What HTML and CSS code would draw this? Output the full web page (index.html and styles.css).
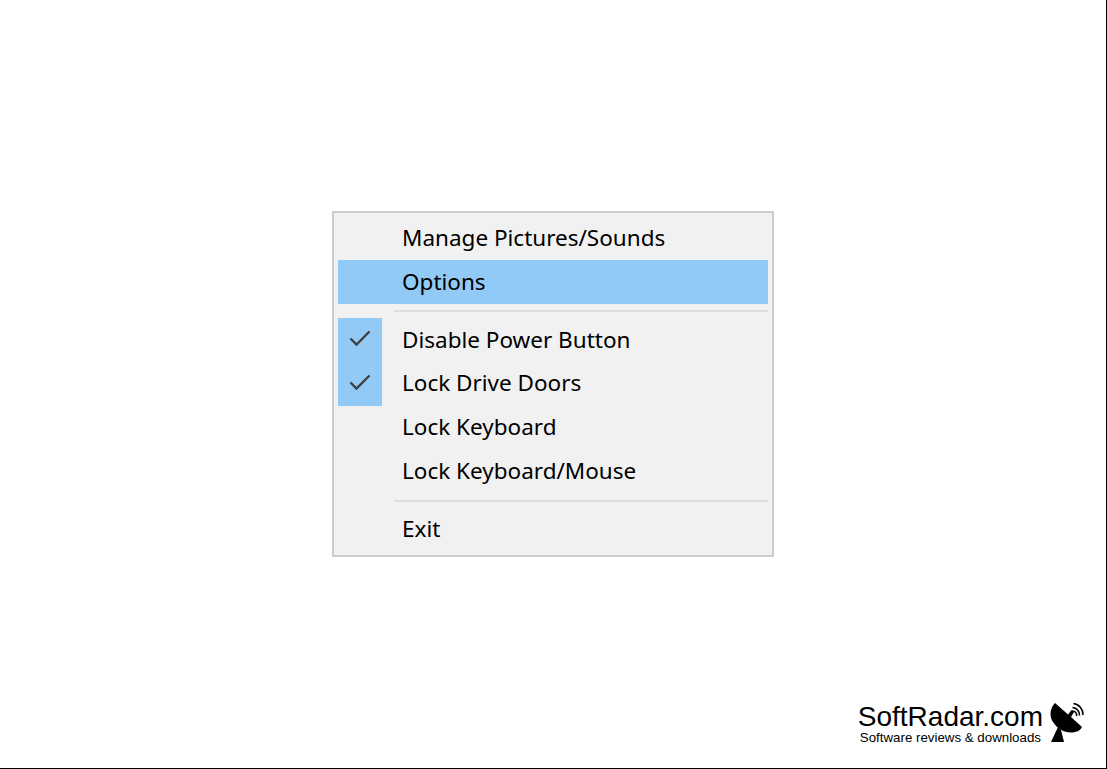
FILE: index.html
```html
<!DOCTYPE html>
<html lang="en">
<head>
<meta charset="utf-8">
<title>Context menu</title>
<link rel="stylesheet" href="styles.css">
</head>
<body>
<main class="page">
  <div class="stage">
    <nav class="menu">
      <div class="item"><span class="gutter"></span><span class="label">Manage Pictures/Sounds</span></div>
      <div class="item active"><span class="gutter"></span><span class="label">Options</span></div>
      <div class="sep"></div>
      <div class="item"><span class="gutter checked"><svg class="check" viewBox="0 0 22 17"><path d="M1.5 8.5 L7.5 14.5 L20.5 1.5"/></svg></span><span class="label">Disable Power Button</span></div>
      <div class="item"><span class="gutter checked"><svg class="check" viewBox="0 0 22 17"><path d="M1.5 8.5 L7.5 14.5 L20.5 1.5"/></svg></span><span class="label raised">Lock Drive Doors</span></div>
      <div class="item"><span class="gutter"></span><span class="label raised">Lock Keyboard</span></div>
      <div class="item"><span class="gutter"></span><span class="label raised">Lock Keyboard/Mouse</span></div>
      <div class="sep"></div>
      <div class="item"><span class="gutter"></span><span class="label raised">Exit</span></div>
    </nav>
  </div>
  <footer class="brand">
    <div class="brand-text">
      <div class="brand-name">SoftRadar.com</div>
      <div class="brand-tag">Software reviews &amp; downloads</div>
    </div>
    <svg class="brand-logo" viewBox="0 0 35 41">
      <path class="dish" d="M5 1 C0 6 -1 14 3 20 C8 28 17 32 25 30 C28 29.5 30.5 28 32 25 L21 15 L24 10 L21.5 8 L18 12.5 Z"/>
      <path class="dish" d="M8 25 L1 40 L14 40 L11 28 Z"/>
      <path class="wave" d="M22 9 A4 4 0 0 1 26.5 14"/>
      <path class="wave" d="M22.5 5.5 A7.5 7.5 0 0 1 29.5 13.5"/>
      <path class="wave" d="M23.5 1.5 A11 11 0 0 1 33 13"/>
    </svg>
  </footer>
</main>
</body>
</html>
```
FILE: styles.css
```css
* { box-sizing: border-box; }
html, body { margin: 0; height: 100%; background: #fff; }
.page {
  width: 1107px;
  height: 769px;
  display: flex;
  flex-direction: column;
  border-right: 1px solid #000;
  border-bottom: 1px solid #000;
  overflow: hidden;
}
.stage {
  flex: 1;
  padding: 211px 0 0 332px;
}
.menu {
  width: 442px;
  height: 346px;
  padding: 3px 4px;
  background: #f1f1f1;
  border: 2px solid #cccccc;
  font-family: "Noto Sans", "Open Sans", sans-serif;
  font-size: 22.5px;
  color: #000;
}
.item {
  display: flex;
  align-items: center;
  height: 44px;
}
.item.active { background: #91c9f7; }
.gutter {
  width: 44px;
  height: 100%;
  flex: none;
  display: flex;
  align-items: center;
  justify-content: center;
}
.gutter.checked { background: #91c9f7; }
.label {
  padding-left: 20px;
  line-height: 1;
  white-space: nowrap;
}
.label.raised { margin-bottom: 2px; }
.sep {
  height: 2px;
  margin: 6px 0 6px 56px;
  background: #dcdcdc;
}
.check {
  width: 22px;
  height: 17px;
  margin-top: -3px;
  fill: none;
  stroke: #404040;
  stroke-width: 2.4;
}
.brand {
  display: flex;
  justify-content: flex-end;
  align-items: flex-start;
  padding: 0 21px 23px 0;
}
.brand-text {
  font-family: "Liberation Sans", Arial, sans-serif;
  color: #000;
  text-align: center;
}
.brand-name { font-size: 28px; line-height: 29px; }
.brand-tag { font-size: 13.3px; line-height: 14px; }
.brand-logo { width: 35px; height: 41px; margin-left: 7px; flex: none; overflow: visible; }
.dish { fill: #000; }
.wave { fill: none; stroke: #000; stroke-width: 1.6; }
```
